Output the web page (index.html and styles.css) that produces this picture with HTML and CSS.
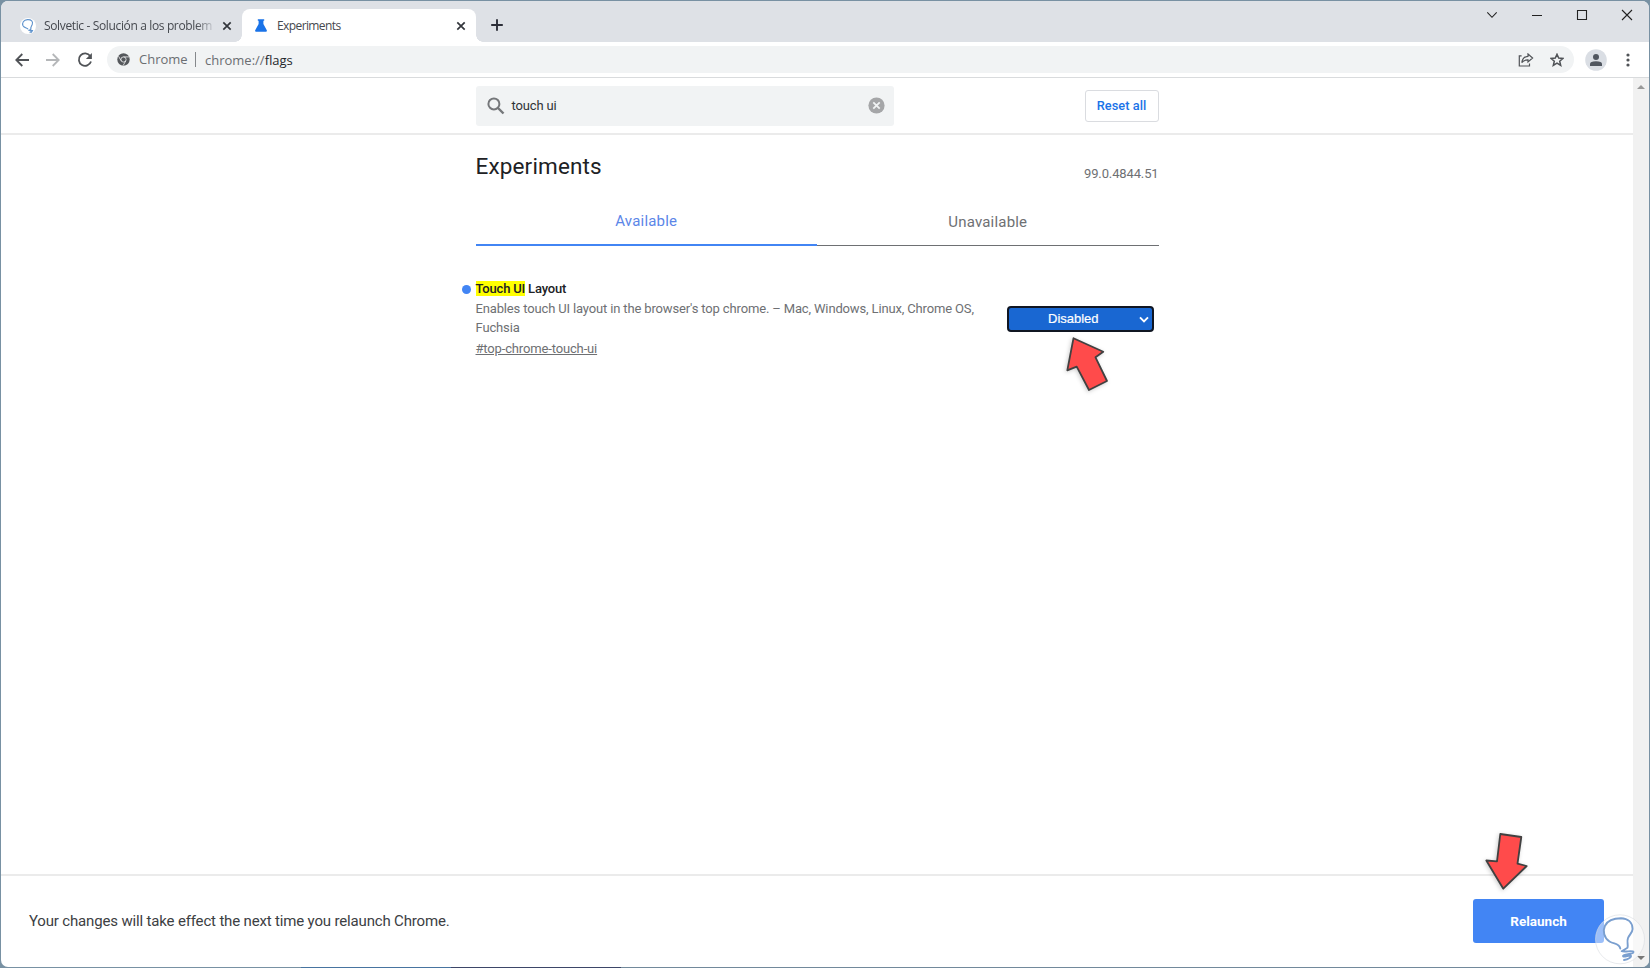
FILE: index.html
```html
<!DOCTYPE html>
<html lang="en">
<head>
<meta charset="utf-8">
<title>Experiments</title>
<link rel="stylesheet" href="styles.css">
</head>
<body>
<div class="window">
  <div class="tabstrip">
    <div class="tab tab-back">
      <svg class="favicon" width="16" height="16" viewBox="0 0 16 16"><circle cx="8" cy="8" r="8" fill="#fff"/><path d="M8.200 11.400C7.500 9.800 4.500 10.300 3 7.800C1.800 5 3.500 2 7.500 1.600C11.500 1.400 13.200 3.600 12.300 6.200C11.500 8.200 10.400 9 10.900 11.200L9 12.300C10.500 12.900 12.800 12.200 12.700 12.800C12.500 13.500 10 13.500 10 14.200L12 14.200" fill="none" stroke="#5f93cd" stroke-width="1.100"/></svg>
      <span class="tab-title faded">Solvetic - Solución a los problem</span>
      <svg class="tab-x" width="10" height="10" viewBox="0 0 10 10"><path d="M1.300 1.300L8.700 8.700M8.700 1.300L1.300 8.700"/></svg>
    </div>
    <div class="tab tab-front">
      <svg class="flask" width="12" height="13" viewBox="0 0 12 13"><path d="M2.800.3H9.200V1.800H8.400V5L11.800 11.200Q12.200 12.700 11 12.700H1Q-.2 12.700.2 11.200L3.600 5V1.800H2.800Z" fill="#1a73e8"/></svg>
      <span class="tab-title">Experiments</span>
      <svg class="tab-x" width="10" height="10" viewBox="0 0 10 10"><path d="M1.300 1.300L8.700 8.700M8.700 1.300L1.300 8.700"/></svg>
    </div>
    <svg class="new-tab" width="12" height="12" viewBox="0 0 12 12"><path d="M6 .2V11.800M.2 6H11.800" stroke="#2c2e38" stroke-width="1.900"/></svg>
    <div class="controls">
      <svg width="12" height="12" viewBox="0 0 12 12"><path d="M1.300 3.300L6 8.300L10.700 3.300"/></svg>
      <svg width="12" height="12" viewBox="0 0 12 12"><path d="M1 6.500H11"/></svg>
      <svg width="12" height="12" viewBox="0 0 12 12"><path d="M1.500 1.500H10.500V10.500H1.500Z"/></svg>
      <svg width="12" height="12" viewBox="0 0 12 12"><path d="M1 1L11 11M11 1L1 11"/></svg>
    </div>
  </div>

  <div class="toolbar">
    <svg class="nav-back" width="14" height="14" viewBox="0 0 14 14"><path d="M14 7H1.500M7.300 1L1.300 7L7.300 13"/></svg>
    <svg class="nav-forward" width="14" height="14" viewBox="0 0 14 14"><path d="M0 7H12.500M6.700 1L12.700 7L6.700 13"/></svg>
    <svg class="nav-reload" width="16" height="16" viewBox="0 0 16 16"><path d="M13.200 4.100A6.200 6.200 0 1 0 14 9.500"/><path d="M14.900 1V7H8.900Z" class="solid"/></svg>
    <div class="omnibox">
      <svg class="chrome-icon" width="13" height="13" viewBox="0 0 13 13"><circle cx="6.500" cy="6.500" r="6.200" fill="#55585c"/><circle cx="6.500" cy="6.500" r="2.600" fill="none" stroke="#f1f3f4" stroke-width=".8"/><path d="M6.500 3.900H12M4.200 7.800L1.500 3.200M8.800 7.800L6.100 12.600" stroke="#f1f3f4" stroke-width=".8"/></svg>
      <span class="site">Chrome</span>
      <span class="url">chrome://<b>flags</b></span>
      <svg class="share" width="16" height="14" viewBox="0 0 16 14"><path d="M3.600 2.800H1.300V13H11.500V10.500M10 1L14.600 5L10 9V6.900C7 6.800 5.300 7.600 3.800 9.600C4.300 6.300 6.200 3.600 10 3.300Z"/></svg>
      <svg class="star" width="14" height="14" viewBox="0 0 14 14"><path d="M7 1.300L8.700 5.100L12.900 5.500L9.700 8.200L10.700 12.400L7 10.200L3.300 12.400L4.300 8.200L1.100 5.500L5.300 5.100Z"/></svg>
    </div>
    <svg class="avatar" width="22" height="22" viewBox="0 0 22 22"><circle cx="11" cy="11" r="10.800" fill="#dadee4"/><circle cx="11" cy="8" r="3" fill="#50565f"/><path d="M5 17V15Q5 12.300 11 12.200Q17 12.300 17 15V17Z" fill="#50565f"/></svg>
    <svg class="kebab" width="4" height="14" viewBox="0 0 4 14"><circle cx="2" cy="2" r="1.600"/><circle cx="2" cy="7" r="1.600"/><circle cx="2" cy="12" r="1.600"/></svg>
  </div>

  <div class="viewport">
    <div class="page">
      <header class="page-header">
        <div class="column header-row">
          <div class="search">
            <svg width="18" height="18" viewBox="0 0 18 18"><circle cx="6.900" cy="6.900" r="5.500" fill="none" stroke="#75777a" stroke-width="2"/><path d="M11 11L16.500 16.500" stroke="#75777a" stroke-width="2.400"/></svg>
            <span class="query">touch ui</span>
            <svg class="clear" width="17" height="17" viewBox="0 0 17 17"><circle cx="8.500" cy="8.500" r="8.100" fill="#a5a6a8"/><path d="M5.300 5.300L11.700 11.700M11.700 5.300L5.300 11.700" stroke="#f1f3f4" stroke-width="1.800"/></svg>
          </div>
          <div class="reset"><span>Reset all</span></div>
        </div>
      </header>
      <main class="column content">
        <div class="title-row"><h1><span>Experiments</span></h1><span class="version">99.0.4844.51</span></div>
        <div class="tabs">
          <div class="page-tab selected"><span>Available</span></div>
          <div class="page-tab"><span>Unavailable</span></div>
        </div>
        <section class="flag">
          <div class="flag-text">
            <div class="flag-name"><i class="dot"></i><mark>Touch UI</mark> <span class="rest">Layout</span></div>
            <p class="desc"><span class="line-one">Enables touch UI layout in the browser's top chrome. – Mac, Windows, Linux, Chrome OS,</span><br>Fuchsia</p>
            <span class="permalink">#top-chrome-touch-ui</span>
          </div>
          <div class="select"><span>Disabled</span><svg width="10" height="7" viewBox="0 0 10 7"><path d="M1 1.300L5 5.300L9 1.300" fill="none" stroke="#fff" stroke-width="1.900"/></svg></div>
        </section>
      </main>
      <footer class="restart">
        <span class="notice">Your changes will take effect the next time you relaunch Chrome.</span>
        <div class="relaunch"><span>Relaunch</span></div>
      </footer>
    </div>
    <div class="scrollbar">
      <svg width="8" height="4" viewBox="0 0 8 4"><path d="M0 4L4 0L8 4Z" fill="#999"/></svg>
      <svg width="8" height="4" viewBox="0 0 8 4"><path d="M0 0L4 4L8 0Z" fill="#777"/></svg>
    </div>
  </div>
</div>
<svg class="annotations" width="1650" height="968" viewBox="0 0 1650 968">
  <g class="arrow">
    <path d="M1073.500 338.200L1103.300 351.700L1095.500 357.300L1107 381L1089 390L1076.700 366.700L1067.300 370.300Z"/>
    <path d="M1500.300 834L1521.300 837L1517.500 863.700L1526.700 866L1503.300 888.700L1486.300 860.500L1497 861.300Z"/>
  </g>
  <circle cx="1620" cy="939.300" r="24.500" fill="#fff" fill-opacity=".48" stroke="#d9dce1" stroke-opacity=".6"/>
  <path d="M1620.300 948.500C1619 942.500 1614 944.500 1609.500 941.500C1604 938 1602.500 931 1605 925.700C1608 920 1614 918.300 1621 918.300C1628 918.500 1632.500 922.500 1632.600 929C1632.500 932.500 1629.500 934.500 1628 938C1626.500 942 1628.500 944.500 1627.500 947.700L1621.700 951.200C1625 952.500 1633 950 1633.500 952C1634 954.500 1623.500 954 1623 956C1623 958 1631.500 954 1631 956.200C1630.500 958.300 1628.500 959 1624 960" fill="none" stroke="#7a9fcf" stroke-width="1.900" stroke-linejoin="round" stroke-linecap="round"/>
</svg>
</body>
</html>
```
FILE: styles.css
```css
* { box-sizing: border-box; }
body { margin: 0; width: 1650px; height: 968px; padding: 1px; overflow: hidden; background: linear-gradient(90deg, #4774a0 150px, #3d4668 150px 320px, #72899b 320px) 301px 967px / 1349px 1px no-repeat, #7891a3; font-family: Roboto, sans-serif; }
svg { display: block; flex: none; }
.window { display: flex; flex-direction: column; width: 1648px; height: 966px; background: #fff; border-radius: 7px; overflow: hidden; }
.tabstrip { display: flex; height: 41px; background: #dee1e6; font-family: "Open Sans", "Noto Sans", sans-serif; font-size: 12px; color: #45484e; }
.tab { display: flex; align-items: center; height: 33px; margin-top: 8px; }
.tab-back { width: 241px; padding: 0 10px 0 19px; }
.tab-front { width: 234px; padding: 0 10px 0 13px; background: #fff; border-radius: 8px 8px 0 0; position: relative; }
.tab-front::before, .tab-front::after { content: ""; position: absolute; bottom: 0; width: 7px; height: 7px; }
.tab-front::before { left: -7px; background: radial-gradient(circle at 0 0, transparent 6.500px, #fff 7px); }
.tab-front::after { right: -7px; background: radial-gradient(circle at 100% 0, transparent 6.500px, #fff 7px); }
.tab-title { flex: none; white-space: nowrap; letter-spacing: -.6px; }
.favicon { margin-right: 8px; }
.flask { margin-right: 10px; }
.faded { width: 172px; letter-spacing: -.36px; -webkit-mask-image: linear-gradient(90deg, #000 152px, transparent 172px); mask-image: linear-gradient(90deg, #000 152px, transparent 172px); }
.tab-x { margin-left: auto; fill: none; stroke: #33363c; stroke-width: 1.700; }
.new-tab { margin: 18px 0 0 15px; }
.controls { display: flex; gap: 33px; margin: 8px 16px 0 auto; fill: none; stroke: #222; stroke-width: 1.100; }
.toolbar { display: flex; align-items: center; height: 36px; border-bottom: 1px solid #d9dbdd; padding: 0 19px 0 14px; fill: none; stroke: #505357; stroke-width: 1.800; }
.nav-forward { margin-left: 17px; stroke: #b5b7b9; }
.nav-reload { margin: 0 14px 0 17px; }
.solid { fill: #505357; stroke: none; }
.omnibox { display: flex; align-items: center; flex: 1; height: 27px; padding: 0 10px 0 10px; border-radius: 14px; background: #f1f3f4; font-family: "Open Sans", "Noto Sans", sans-serif; font-size: 13px; color: #6b6e72; }
.chrome-icon { margin-right: 9px; stroke: none; }
.site { width: 57px; border-right: 1px solid #85888c; height: 15px; line-height: 15px; margin-right: 9px; }
.url b { font-weight: 400; color: #25272b; }
.share { margin-left: auto; stroke-width: 1.200; }
.star { margin: 0 0 0 16px; stroke-width: 1.500; }
.avatar { margin-left: 11px; stroke: none; }
.kebab { margin-left: 19px; fill: #505357; stroke: none; }
.viewport { display: flex; flex: 1; }
.page { display: flex; flex-direction: column; width: 1632px; }
.column { width: 683px; margin-left: 474.500px; }
.page-header { height: 57px; border-bottom: 2px solid #ebebeb; }
.header-row { display: flex; justify-content: space-between; padding-top: 8px; }
.search { display: flex; align-items: center; width: 418px; height: 40px; padding: 0 9px 1px 11px; background: #f1f3f4; border-radius: 3px; }
.query { margin-left: 7px; font-size: 13px; letter-spacing: -.15px; color: #303236; }
.clear { margin-left: auto; }
.reset { display: flex; align-items: center; justify-content: center; width: 74px; height: 32px; margin-top: 4px; padding-bottom: 1px; border: 1px solid #dadce0; border-radius: 3px; font-size: 12.800px; font-weight: 500; color: #1a73e8; }
.reset span { letter-spacing: .03px; }
.content { flex: 1; }
.title-row { display: flex; justify-content: space-between; height: 60px; }
h1 { margin: 17px 0 0; font-size: 22.500px; line-height: 28px; font-weight: 400; letter-spacing: .15px; color: #202124; }
.version { margin-top: 31px; font-size: 13px; line-height: 16px; letter-spacing: -.13px; color: #6e7073; }
.tabs { display: flex; height: 51px; }
.page-tab { width: 50%; padding-top: 18px; text-align: center; font-size: 15px; line-height: 18px; letter-spacing: .2px; color: #6e7073; border-bottom: 1px solid #6e7073; }
.page-tab.selected { padding-top: 17px; color: #5b86e8; border-bottom: 2px solid #4285f4; }
.flag { display: flex; font-size: 13px; letter-spacing: -.148px; color: #6e7073; }
.flag-text { width: 531px; padding-top: 34px; }
.flag-name { position: relative; line-height: 17px; color: #202124; font-weight: 500; letter-spacing: -.19px; }
mark { background: #ff0; color: inherit; }
.dot { position: absolute; left: -13.500px; top: 5px; width: 9px; height: 9px; border-radius: 50%; background: #4285f4; }
.desc { margin: 2px 0 0; line-height: 19px; white-space: nowrap; }
.permalink { display: inline-block; margin-top: 3px; line-height: 17px; text-decoration: underline; }
.select { display: flex; align-items: center; width: 147px; height: 26px; margin-top: 60px; border: 2px solid #101622; border-radius: 4px; background: #1967d2; color: #fff; font-family: "Liberation Sans", Arial, sans-serif; font-size: 13px; letter-spacing: 0; -webkit-text-stroke: .2px #fff; padding: 0 3px 0 39.500px; }
.select span { padding-bottom: 2px; }
.select svg { margin-left: auto; }
.restart { display: flex; align-items: center; justify-content: space-between; height: 93px; border-top: 2px solid #ebebeb; padding: 0 29px 1px 28px; font-size: 15px; letter-spacing: -.165px; color: #3c4043; }
.relaunch { display: flex; align-items: center; justify-content: center; width: 131px; height: 44px; background: #4285f4; border-radius: 3px; color: #fff; font-size: 13.500px; letter-spacing: 0; font-weight: 700; }
.scrollbar { display: flex; flex-direction: column; align-items: center; justify-content: space-between; width: 16px; background: #f1f1f1; padding: 7px 0; }
.annotations { position: absolute; left: 0; top: 0; }
.arrow { fill: #ff4b4b; stroke: #414141; stroke-width: 1.800; stroke-linejoin: round; filter: drop-shadow(-1px 1px 2px rgba(0,0,0,.2)); }
```
